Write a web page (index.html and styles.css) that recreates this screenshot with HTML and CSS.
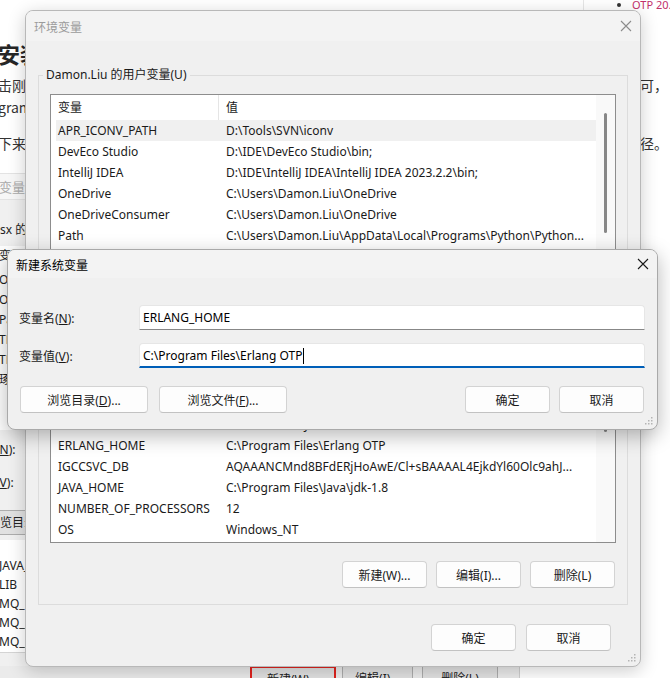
FILE: index.html
```html
<!DOCTYPE html>
<html lang="zh-CN">
<head>
<meta charset="utf-8">
<title>安装 Erlang/OTP</title>
<link rel="stylesheet" href="styles.css">
</head>
<body>

<!-- article underneath the dialogs -->
<main class="article">
  <h2 class="h">安装 Erlang/OTP</h2>
  <p class="para">
    <span class="ln"><span class="lt">击刚刚下载的 otp_win64_26.1.exe 安装包，一路点击下一步完成安装，安装目录保持默认即</span><span class="rt">可，</span></span>
    <span class="ln"><span class="lt">gram Files\Erlang OTP。</span></span>
  </p>
  <p class="para">
    <span class="ln"><span class="lt">下来配置环境变量，新建系统变量 ERLANG_HOME，变量值为 Erlang 的安装路</span><span class="rt">路径。</span></span>
  </p>

  <figure class="shot">
    <div class="shot-title">环境变量</div>
    <div class="shot-group">Cxsx 的用户变量(U)</div>
    <div class="shot-list">
      <div class="shot-head">变量</div>
      <div class="shot-row">OneDrive</div>
      <div class="shot-row">OneDriveConsumer</div>
      <div class="shot-row">Path</div>
      <div class="shot-row">TEMP</div>
      <div class="shot-row">TMP</div>
      <div class="shot-row">琢磨</div>
    </div>
    <div class="shot-fields">
      <div class="shot-label">变量名(<u>N</u>):</div>
      <div class="shot-label">变量值(<u>V</u>):</div>
    </div>
    <div class="shot-browse"><span class="shot-bbtn">浏览目录(D)...</span></div>
    <div class="shot-list2">
      <div class="shot-head2"></div>
      <div class="shot-row">JAVA_HOME</div>
      <div class="shot-row">LIB</div>
      <div class="shot-row">MQ_FILE_PATH</div>
      <div class="shot-row">MQ_JAVA_DATA_PATH</div>
      <div class="shot-row">MQ_JAVA_INSTALL_PATH</div>
    </div>
    <div class="shot-btns">
      <span class="shot-btn mark">新建(W)...</span>
      <span class="shot-btn b2">编辑(I)...</span>
      <span class="shot-btn b3">删除(L)</span>
    </div>
  </figure>
</main>

<!-- floating table of contents -->
<aside class="toc">
  <ul><li>OTP 20.x</li></ul>
</aside>

<!-- environment variables window (inactive) -->
<section class="win env">
  <header class="titlebar">
    <span class="title">环境变量</span>
    <svg class="close" width="12" height="12" viewBox="0 0 12 12"><path d="M1 1L11 11M11 1L1 11" stroke="#8c8c8c" stroke-width="1.1" fill="none"/></svg>
  </header>
  <div class="env-body">
    <div class="group">
      <div class="group-title">Damon.Liu 的用户变量(U)</div>
      <div class="list">
        <div class="list-main">
          <div class="list-head"><span>变量</span><span>值</span></div>
          <div class="row sel"><span>APR_ICONV_PATH</span><span>D:\Tools\SVN\iconv</span></div>
          <div class="row"><span>DevEco Studio</span><span>D:\IDE\DevEco Studio\bin;</span></div>
          <div class="row"><span>IntelliJ IDEA</span><span>D:\IDE\IntelliJ IDEA\IntelliJ IDEA 2023.2.2\bin;</span></div>
          <div class="row"><span>OneDrive</span><span>C:\Users\Damon.Liu\OneDrive</span></div>
          <div class="row"><span>OneDriveConsumer</span><span>C:\Users\Damon.Liu\OneDrive</span></div>
          <div class="row"><span>Path</span><span>C:\Users\Damon.Liu\AppData\Local\Programs\Python\Python...</span></div>
          <div class="row"><span>TEMP</span><span>C:\Users\Damon.Liu\AppData\Local\Temp</span></div>
          <div class="row"><span>TMP</span><span>C:\Users\Damon.Liu\AppData\Local\Temp</span></div>
        </div>
        <div class="vscroll"><i class="thumb user"></i></div>
      </div>
      <div class="btns">
        <button class="btn">新建(N)...</button>
        <button class="btn">编辑(E)...</button>
        <button class="btn">删除(D)</button>
      </div>
    </div>

    <div class="group sys">
      <div class="group-title">系统变量(S)</div>
      <div class="list">
        <div class="list-main">
          <div class="list-head"><span>变量</span><span>值</span></div>
          <div class="row"><span>ComSpec</span><span>C:\Windows\system32\cmd.exe</span></div>
          <div class="row"><span>DriverData</span><span>C:\Windows\System32\Drivers\DriverData</span></div>
          <div class="row"><span>ERLANG_HOME</span><span>C:\Program Files\Erlang OTP</span></div>
          <div class="row"><span>IGCCSVC_DB</span><span>AQAAANCMnd8BFdERjHoAwE/Cl+sBAAAAL4EjkdYl60Olc9ahJ...</span></div>
          <div class="row"><span>JAVA_HOME</span><span>C:\Program Files\Java\jdk-1.8</span></div>
          <div class="row"><span>NUMBER_OF_PROCESSORS</span><span>12</span></div>
          <div class="row"><span>OS</span><span>Windows_NT</span></div>
        </div>
        <div class="vscroll"><i class="thumb system"></i></div>
      </div>
      <div class="btns">
        <button class="btn">新建(W)...</button>
        <button class="btn">编辑(I)...</button>
        <button class="btn">删除(L)</button>
      </div>
    </div>

    <div class="footer">
      <button class="btn">确定</button>
      <button class="btn">取消</button>
    </div>
  </div>
  <svg class="grip" width="9" height="9" viewBox="0 0 9 9"><g fill="#b4b4b4"><rect x="7" y="1" width="1.5" height="1.5"/><rect x="4" y="4" width="1.5" height="1.5"/><rect x="7" y="4" width="1.5" height="1.5"/><rect x="1" y="7" width="1.5" height="1.5"/><rect x="4" y="7" width="1.5" height="1.5"/><rect x="7" y="7" width="1.5" height="1.5"/></g></svg>
</section>

<!-- new system variable dialog (active) -->
<section class="win dlg">
  <header class="titlebar">
    <span class="title">新建系统变量</span>
    <svg class="close" width="12" height="12" viewBox="0 0 12 12"><path d="M1 1L11 11M11 1L1 11" stroke="#1a1a1a" stroke-width="1.1" fill="none"/></svg>
  </header>
  <div class="dlg-body">
    <div class="form">
      <label class="lbl">变量名(<u>N</u>):</label>
      <div class="field">ERLANG_HOME</div>
      <label class="lbl">变量值(<u>V</u>):</label>
      <div class="field focus">C:\Program Files\Erlang OTP<i class="caret"></i></div>
    </div>
    <div class="dlg-btns">
      <button class="btn wide">浏览目录(<u>D</u>)...</button>
      <button class="btn wide">浏览文件(<u>F</u>)...</button>
      <span class="spacer"></span>
      <button class="btn">确定</button>
      <button class="btn">取消</button>
    </div>
  </div>
  <svg class="grip" width="9" height="9" viewBox="0 0 9 9"><g fill="#b4b4b4"><rect x="7" y="1" width="1.5" height="1.5"/><rect x="4" y="4" width="1.5" height="1.5"/><rect x="7" y="4" width="1.5" height="1.5"/><rect x="1" y="7" width="1.5" height="1.5"/><rect x="4" y="7" width="1.5" height="1.5"/><rect x="7" y="7" width="1.5" height="1.5"/></g></svg>
</section>

</body>
</html>
```

FILE: styles.css
```css
* { box-sizing: border-box; }

html, body { margin: 0; }

body {
  position: relative;
  width: 670px;
  height: 678px;
  overflow: hidden;
  background: #fff;
  font-family: "Noto Sans", "Noto Sans CJK SC", sans-serif;
  font-size: 12px;
  color: #1a1a1a;
}

/* ---------- article ---------- */
.article {
  width: 670px;
  margin-left: -2px;
  padding-top: 39px;
  color: #333;
  font-family: "Noto Sans CJK SC", sans-serif;
  font-size: 14px;
}
.h {
  margin: 0;
  font-size: 22px;
  line-height: 28px;
  font-weight: 700;
  color: #262626;
}
.para { margin: 7px 0 0; line-height: 22px; }
.para + .para { margin-top: 14px; }
.ln { display: flex; white-space: nowrap; }
.lt { flex: 1; min-width: 0; overflow: hidden; }
.rt { flex: none; }

/* screenshot embedded in the article */
.shot {
  margin: 19px 0 0 -58px;
  width: 580px;
  background: #f0f0f0;
  border-right: 1px solid #cfcfcf;
  font-family: "Noto Sans", "Noto Sans CJK SC", sans-serif;
  font-size: 12px;
  color: #222;
}
.shot-title {
  height: 27px;
  padding-left: 33px;
  background: #f7f7f7;
  border-top: 1px solid #e3e3e3;
  border-bottom: 1px solid #e3e3e3;
  color: #ababab;
  font-family: "Noto Sans CJK SC", sans-serif;
  font-size: 13px;
  line-height: 25px;
}
.shot-group { height: 46px; padding: 20px 0 0 46px; line-height: 20px; }
.shot-list { height: 184px; background: #fff; padding-left: 59px; }
.shot-head { height: 20px; line-height: 20px; margin-bottom: 4px; }
.shot-row { height: 20px; line-height: 20px; }
.shot-fields { height: 80px; padding: 10px 0 0 20px; }
.shot-label { height: 20px; line-height: 20px; margin-bottom: 13px; }
.shot-browse { height: 25px; padding-left: 30px; }
.shot-bbtn {
  display: block;
  width: 120px;
  height: 25px;
  padding-left: 18px;
  line-height: 23px;
  background: #e1e1e1;
  border-top: 1px solid #adadad;
  border-bottom: 1px solid #adadad;
}
.shot-list2 { margin-top: 5px; height: 113px; background: #fff; padding-left: 59px; border-bottom: 1px solid #d4d4d4; }
.shot-head2 { height: 16px; }
.shot-list2 .shot-row { height: 19px; line-height: 19px; }
.shot-btns { display: flex; margin-top: 13px; padding-left: 310px; height: 30px; background: #ebebeb; }
.shot-btn {
  height: 26px;
  line-height: 24px;
  text-align: center;
  background: #e1e1e1;
  border: 1px solid #adadad;
}
.shot-btn.mark { width: 86px; border: 2px solid #e0231e; }
.shot-btn.b2 { width: 71px; margin-left: 6px; }
.shot-btn.b3 { width: 76px; margin-left: 9px; }

/* floating toc */
.toc {
  position: absolute;
  top: -3px;
  left: 583px;
  width: 100px;
  height: 15px;
  border-left: 1px solid #e6e6e6;
  background: #fff;
  font-size: 11px;
  line-height: 16px;
  color: #c2306a;
}
.toc ul { margin: 0; padding-left: 48px; }
.toc li::marker { color: #333; }

/* ---------- windows ---------- */
.win {
  position: absolute;
  display: flex;
  flex-direction: column;
  background: #f0f0f0;
  border: 1px solid #b8b8b8;
  border-radius: 8px;
  overflow: hidden;
}
.titlebar {
  display: flex;
  align-items: center;
  justify-content: space-between;
  background: #f3f3f3;
  padding-left: 8px;
  font-family: "Noto Sans CJK SC", sans-serif;
}
.close { display: block; }
.grip { position: absolute; right: 4px; bottom: 4px; }

.btn {
  width: 85px;
  height: 27px;
  padding: 0;
  background: #fdfdfd;
  border: 1px solid #d3d3d3;
  border-bottom-color: #c2c2c2;
  border-radius: 4px;
  font-family: "Noto Sans", "Noto Sans CJK SC", sans-serif;
  font-size: 12px;
  color: #1a1a1a;
}

/* environment variables window */
.env {
  left: 25px;
  top: 10px;
  width: 616px;
  height: 657px;
  box-shadow: 0 4px 18px rgba(0, 0, 0, 0.2);
}
.env .titlebar { height: 30px; }
.env .title { color: #9b9b9b; }
.env .close { margin-right: 8px; }
.env-body { padding: 0 12px; }

.group {
  margin-top: 34px;
  border: 1px solid #dcdcdc;
  padding: 0 11px 16px 11px;
}
.group.sys { margin-top: 16px; }
.group-title {
  width: fit-content;
  height: 16px;
  margin: -9px 0 0 -7px;
  padding: 0 3px;
  line-height: 16px;
  background: #f0f0f0;
}

.list {
  display: flex;
  height: 176px;
  margin-top: 11px;
  border: 1px solid #8d8d8d;
  background: #fff;
  overflow: hidden;
}
.list-main { flex: 1; min-width: 0; padding-left: 5px; }
.list-head, .row {
  display: grid;
  grid-template-columns: 163px 1fr;
  white-space: nowrap;
}
.list-head { height: 25px; line-height: 25px; }
.list-head span:first-child { border-right: 1px solid #e5e5e5; }
.row { height: 21px; line-height: 21px; }
.row.sel { background: #f0f0f0; }
.list-head span, .row span { overflow: hidden; padding-left: 7px; }
.list-head span:first-child, .row span:first-child { padding-left: 2px; }

.vscroll {
  flex: none;
  width: 19px;
  display: flex;
  justify-content: center;
  background: #f9f9f9;
}
.thumb { display: block; width: 3px; margin-top: 18px; border-radius: 2px; background: #878787; }
.thumb.user { height: 120px; }
.thumb.system { height: 46px; }

.btns {
  display: flex;
  justify-content: flex-end;
  gap: 9px;
  margin-top: 18px;
  padding-right: 1px;
}
.footer {
  display: flex;
  justify-content: flex-end;
  gap: 10px;
  margin-top: 19px;
  padding-right: 17px;
}

/* new system variable dialog */
.dlg {
  left: 7px;
  top: 249px;
  width: 651px;
  height: 181px;
  border-color: #a9a9a9;
  box-shadow: 0 6px 20px rgba(0, 0, 0, 0.28);
}
.dlg .titlebar { height: 28px; }
.dlg .title { color: #000; }
.dlg .close { margin-right: 8px; }
.dlg-body { padding: 27px 12px 0 11px; }

.form {
  display: grid;
  grid-template-columns: 120px 1fr;
  row-gap: 13px;
  align-items: center;
}
.lbl { color: #1a1a1a; }
.field {
  display: flex;
  align-items: center;
  height: 25px;
  padding-left: 3px;
  background: #fff;
  border: 1px solid #e6e6e6;
  border-bottom: 1px solid #878787;
  border-radius: 4px 4px 0 0;
  color: #000;
}
.field.focus { border-bottom: 2px solid #005fb8; padding-top: 1px; }
.caret { display: block; width: 1px; height: 16px; margin-left: 1px; background: #000; }

.dlg-btns {
  display: flex;
  gap: 9px;
  margin-top: 18px;
  padding-left: 1px;
  padding-right: 1px;
}
.dlg-btns .btn.wide { width: 128px; }
.dlg-btns .btn.wide + .btn.wide { margin-left: 2px; }
.spacer { flex: 1; }
```
